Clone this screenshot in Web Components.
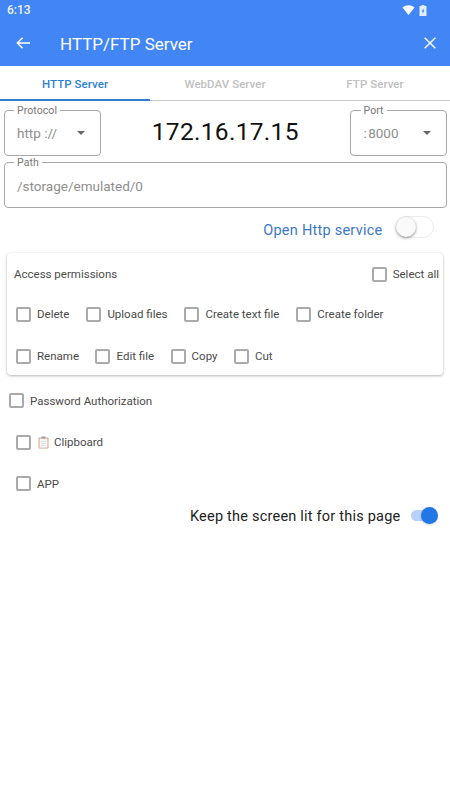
<!DOCTYPE html>
<html><head><meta charset="utf-8"><title>HTTP/FTP Server</title>
<style>
html,body{margin:0;padding:0;background:#fff;font-family:Roboto,"Liberation Sans",sans-serif}
body{width:450px;height:800px;overflow:hidden}
</style></head><body>
<ftp-header title-text="HTTP/FTP Server" time="6:13"></ftp-header>
<ftp-tabs></ftp-tabs>
<main-form></main-form>
<script>
function def(name,html){
  customElements.define(name,class extends HTMLElement{
    constructor(){super();this.attachShadow({mode:'open'});if(typeof html!=='function')this.shadowRoot.innerHTML=html;}
    connectedCallback(){
      if(typeof html==='function'){this.shadowRoot.innerHTML=html(this);}
    }
  });
}
def('ftp-header',el=>`<style>
:host{display:block;background:#4285f4;color:#fff;height:66px}
.status{height:20px;display:flex;align-items:center;justify-content:space-between;padding:0 23px 0 7px;font-size:12px;font-weight:500;color:#eef3fe;box-sizing:border-box}
.icons{display:flex;align-items:center;gap:4.5px}
.bar{height:46px;display:flex;align-items:center;padding:0 14px 0 16px;box-sizing:border-box}
h1{margin:0 0 0 30px;font-size:17px;font-weight:400;flex:1;position:relative;top:1px}
svg{display:block}
</style>
<div class="status"><span>${el.getAttribute('time')}</span><span class="icons">
<svg width="13" height="10" viewBox="0 0 13 10"><path d="M0.5 2.6C4 -.5 9 -.5 12.5 2.6L6.5 10Z" fill="#fff"/></svg>
<svg width="8" height="11" viewBox="0 0 8 11"><path d="M2.5 0H5.5V1H7.5V11H.5V1H2.5Z" fill="#fff" opacity=".85"/><path d="M4.4 3.2L2.6 6.4H3.7V8.8L5.4 5.6H4.4Z" fill="#4285f4"/></svg>
</span></div>
<div class="bar">
<svg width="14" height="12" viewBox="0 0 14 12"><path d="M14 6H1.5M6.6 .8L1.3 6l5.3 5.2" fill="none" stroke="#fff" stroke-width="1.4"/></svg>
<h1>${el.getAttribute('title-text')}</h1>
<svg width="12" height="12" viewBox="0 0 12 12"><path d="M.7 .7L11.3 11.3M11.3 .7L.7 11.3" stroke="#fff" stroke-width="1.4"/></svg>
</div>`);
def('ftp-tabs',`<style>
:host{display:grid;grid-template-columns:repeat(3,150px);height:34px;background:#fff;border-bottom:1px solid #c9c9c9;box-sizing:content-box}
div{display:flex;align-items:center;justify-content:center;font-size:11.5px;font-weight:500;color:#c0c0c0;letter-spacing:.05px;padding-top:2px;box-sizing:border-box}
.on{color:#2a7fd1;border-bottom:2px solid #2a7fd1;margin-bottom:-1px;height:35px;padding-top:3px}
</style><div class="on">HTTP Server</div><div>WebDAV Server</div><div>FTP Server</div>`);
def('out-field',el=>`<style>
:host{display:block;box-sizing:border-box}
fieldset{margin:0;padding:0 0 0 9.5px;border:1px solid #a8a8a8;border-radius:4px;height:100%;box-sizing:border-box;display:flex;align-items:center;min-width:0}
legend{font-size:10.5px;color:#777;padding:0 3px;line-height:9px;letter-spacing:.08px}
.row{flex:1;display:flex;align-items:center;justify-content:space-between;padding:0 15px 0 3px;font-size:13.5px;color:#8e8e8e;position:relative;top:var(--row-top,-2px)}
i{width:0;height:0;border:4.25px solid transparent;border-top:4.5px solid #666;border-bottom:0;display:block}
</style><fieldset><legend>${el.getAttribute('label')}</legend><div class="row"><span><slot></slot></span>${el.hasAttribute('drop')?'<i></i>':''}</div></fieldset>`);
def('m-check',`<style>
:host{display:inline-flex;align-items:center;font-size:11.5px;color:#4a4a4a;white-space:nowrap}
b{display:block;width:11px;height:11px;border:2px solid #aaa;border-radius:2px;margin-right:var(--gap,6px);flex:none}
</style><b></b><slot></slot>`);
def('m-switch',`<style>
:host{display:block;width:40px;height:24px;position:relative;flex:none}
.t{position:absolute;box-sizing:border-box}
.k{position:absolute;border-radius:50%}
:host(:not([on])) .t{left:1px;top:1px;width:38px;height:22px;border-radius:11px;background:#fff;border:1px solid #ececec}
:host(:not([on])) .k{left:1.5px;top:2px;width:20px;height:20px;background:#fafafa;box-shadow:0 1px 3px rgba(0,0,0,.45)}
:host([on]) .t{background:#b6d0f7;left:0;top:6px;width:26px;height:11px;border-radius:6px}
:host([on]) .k{left:10px;top:3px;width:17px;height:17px;background:#2277e6;box-shadow:0 1px 2px rgba(0,0,0,.2)}
</style><div class="t"></div><div class="k"></div>`);
def('main-form',`<style>
:host{display:block;padding:5px 3.5px 0}
.top{display:grid;grid-template-columns:97px 1fr 96.5px;height:49.5px;align-items:stretch}
.ip{display:flex;align-items:center;justify-content:center;font-size:24.5px;color:#111;letter-spacing:.3px;padding-top:1px}
.path{height:50px;margin-top:2.5px;--row-top:-1px}
.open{display:flex;justify-content:flex-end;align-items:center;height:24px;margin-top:10px;padding-right:12px;gap:12px;color:#3b78c9;font-size:14.5px;letter-spacing:.25px}
.open m-switch{margin-bottom:7px}
.card{margin:11px 3.5px 0;height:122px;box-sizing:border-box;padding:9px 3px 0 7px;border-radius:4px;background:#fff;box-shadow:0 1px 3px rgba(0,0,0,.28),0 0 2px rgba(0,0,0,.06)}
.head{display:flex;justify-content:space-between;align-items:center;height:24px;font-size:11.5px;color:#4a4a4a;padding-right:1px}
.r{display:flex;padding-left:2px;height:24px;margin-top:16px;align-items:center;gap:17px}
.r2{margin-top:18px;gap:16.5px}
.list{display:flex;flex-direction:column;align-items:flex-start;padding:13.5px 0 0 5.5px}
.list m-check{height:24px;margin-bottom:17.5px}
.in{margin-left:7px}
.clip{display:inline-block;vertical-align:-2px;margin-right:5px;margin-left:1px}
.keep{display:flex;justify-content:flex-end;align-items:center;gap:10px;height:24px;margin-top:-9px;padding-right:9px;font-size:14.5px;color:#222;letter-spacing:.22px}
</style>
<div class="top">
<out-field label="Protocol" drop>http ://</out-field>
<div class="ip">172.16.17.15</div>
<out-field label="Port" drop>:&#8202;8000</out-field>
</div>
<out-field class="path" label="Path">/storage/emulated/0</out-field>
<div class="open"><span>Open Http service</span><m-switch></m-switch></div>
<section class="card">
<div class="head"><span>Access permissions</span><m-check>Select all</m-check></div>
<div class="r r1"><m-check>Delete</m-check><m-check>Upload files</m-check><m-check>Create text file</m-check><m-check>Create folder</m-check></div>
<div class="r r2"><m-check>Rename</m-check><m-check>Edit file</m-check><m-check>Copy</m-check><m-check>Cut</m-check></div>
</section>
<div class="list">
<m-check>Password Authorization</m-check>
<m-check class="in"><svg class="clip" width="11" height="13" viewBox="0 0 11 13"><rect x=".5" y="1.5" width="10" height="11" rx="1" fill="#d3a17a"/><rect x="1.5" y="2.5" width="8" height="9.2" fill="#f7f7f7"/><path d="M3 5.5H8M3 7.5H8M3 9.5H7" stroke="#c4ced8" stroke-width=".6"/><rect x="3.5" y=".5" width="4" height="2" fill="#9a9fa6"/></svg>Clipboard</m-check>
<m-check class="in">APP</m-check>
</div>
<div class="keep"><span>Keep the screen lit for this page</span><m-switch on style="width:27px"></m-switch></div>
`);
</script>
</body></html>
